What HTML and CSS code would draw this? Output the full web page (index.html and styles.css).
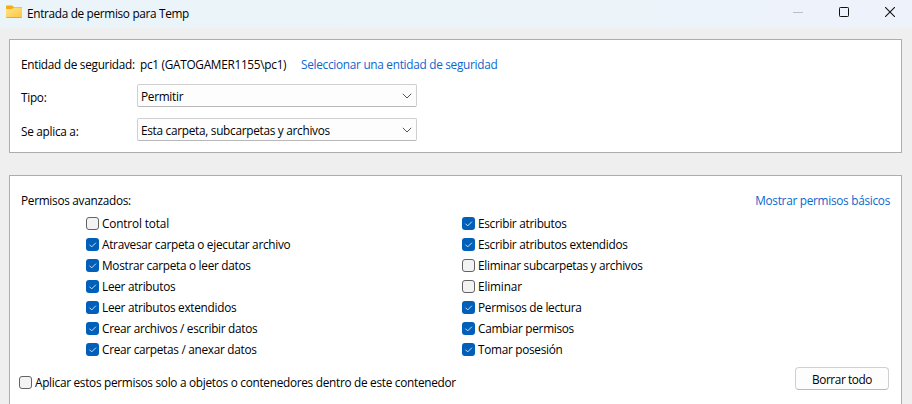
FILE: index.html
```html
<!DOCTYPE html>
<html lang="es">
<head>
<meta charset="utf-8">
<title>Entrada de permiso para Temp</title>
<link rel="stylesheet" href="styles.css">
</head>
<body>
<header class="titlebar">
  <svg class="folder" width="16" height="14" viewBox="0 0 16 14"><defs><linearGradient id="f" x1="0" y1="0" x2="1" y2="1"><stop offset="0" stop-color="#ffe391"/><stop offset="1" stop-color="#fcc63d"/></linearGradient></defs><path d="M0 5V1.2Q0 .4.8.4H6L8 2h7.2q.8 0 .8.8V5z" fill="#f4ad17"/><path d="M0 4h6l2-1.5h7.2q.8 0 .8.8v8.9q0 .8-.8.8H.8Q0 13 0 12.200z" fill="url(#f)"/><path d="M.5 12.500h15" stroke="#eaa91f"/></svg>
  <h1 class="title">Entrada de permiso para Temp</h1>
  <div class="controls">
    <svg width="10" height="10" viewBox="0 0 10 10"><path d="M0 5.500h10" stroke="#bcc0c5"/></svg>
    <svg width="10" height="10" viewBox="0 0 10 10"><rect x=".5" y=".5" width="9" height="9" rx=".8" fill="none" stroke="#111"/></svg>
    <svg width="10" height="10" viewBox="0 0 10 10"><path d="M0 0l10 10M10 0L0 10" stroke="#111" stroke-width="1.100"/></svg>
  </div>
</header>
<main>
  <section class="panel principal">
    <div class="row entity"><span class="label">Entidad de seguridad:</span><span class="account">pc1 (GATOGAMER1155\pc1)</span><a class="link">Seleccionar una entidad de seguridad</a></div>
    <div class="row"><span class="label">Tipo:</span><div class="select"><span>Permitir</span><svg width="10" height="6" viewBox="0 0 10 6"><path d="M.8.8L5 5 9.200.8" fill="none" stroke="#555"/></svg></div></div>
    <div class="row"><span class="label">Se aplica a:</span><div class="select"><span>Esta carpeta, subcarpetas y archivos</span><svg width="10" height="6" viewBox="0 0 10 6"><path d="M.8.8L5 5 9.200.8" fill="none" stroke="#555"/></svg></div></div>
  </section>
  <section class="panel permissions">
    <div class="heading"><span>Permisos avanzados:</span><a class="link">Mostrar permisos básicos</a></div>
    <div class="columns">
      <div class="column">
        <label class="check"><i class="box"></i><span class="wide">Control total</span></label>
        <label class="check"><i class="box on"></i><span>Atravesar carpeta o ejecutar archivo</span></label>
        <label class="check"><i class="box on"></i><span>Mostrar carpeta o leer datos</span></label>
        <label class="check"><i class="box on"></i><span>Leer atributos</span></label>
        <label class="check"><i class="box on"></i><span>Leer atributos extendidos</span></label>
        <label class="check"><i class="box on"></i><span>Crear archivos / escribir datos</span></label>
        <label class="check"><i class="box on"></i><span>Crear carpetas / anexar datos</span></label>
      </div>
      <div class="column">
        <label class="check"><i class="box on"></i><span>Escribir atributos</span></label>
        <label class="check"><i class="box on"></i><span>Escribir atributos extendidos</span></label>
        <label class="check"><i class="box"></i><span>Eliminar subcarpetas y archivos</span></label>
        <label class="check"><i class="box"></i><span class="wide">Eliminar</span></label>
        <label class="check"><i class="box on"></i><span>Permisos de lectura</span></label>
        <label class="check"><i class="box on"></i><span>Cambiar permisos</span></label>
        <label class="check"><i class="box on"></i><span>Tomar posesión</span></label>
      </div>
    </div>
    <div class="footer">
      <label class="check"><i class="box"></i><span>Aplicar estos permisos solo a objetos o contenedores dentro de este contenedor</span></label>
      <button class="clear">Borrar todo</button>
    </div>
  </section>
</main>
<script src="checks.js"></script>
</body>
</html>
```
FILE: checks.js
```js
// Draw the tick inside every selected box.
document.querySelectorAll('.box.on').forEach(function (box) {
  box.innerHTML = '<svg width="13" height="13" viewBox="0 0 13 13"><path d="M3.500 6.700L5.700 8.900 9.900 4.700" fill="none" stroke="#cfe2f5"/></svg>';
});
```
FILE: styles.css
```css
* { box-sizing: border-box; }
body {
  margin: 0;
  height: 404px;
  overflow: hidden;
  background: #efefef;
  color: #000;
  font: 11.8px/16px "Open Sans", "Noto Sans", sans-serif;
  letter-spacing: -0.28px;
  white-space: nowrap;
}
svg { display: block; flex: none; }
.titlebar {
  display: flex;
  height: 28px;
  padding: 0 17px 0 6px;
  background: linear-gradient(90deg, #eaf4f9, #ebf4f8 50%, #eef3fb 85%);
}
.folder { margin-top: 5px; }
.title { margin: 5px 0 0 5px; font-size: 11.8px; font-weight: 400; letter-spacing: -0.32px; }
.controls { display: flex; gap: 36px; margin: 7px 0 0 auto; }
.panel { margin: 0 10px 0 9px; background: #fff; border: 1px solid #adadad; }
.principal { height: 114px; margin-top: 11px; padding: 16px 0 0 11px; }
.row { display: flex; height: 23px; margin-bottom: 11px; align-items: center; }
.entity { height: 16px; margin-bottom: 12px; }
.label { width: 116px; flex: none; padding-top: 2px; }
.entity .label { width: 119px; padding: 0; }
.account { width: 161px; }
.link { color: #0b66cf; }
.select {
  display: flex;
  align-items: center;
  justify-content: space-between;
  width: 280px;
  height: 23px;
  padding: 0 4px 0 3px;
  background: #fdfdfd;
  border: 1px solid #d0d0d0;
  border-bottom-color: #b8b8b8;
  border-radius: 2px;
}
.permissions { height: 229px; margin-top: 22px; padding: 16px 11px 0; border-bottom: 0; }
.heading { display: flex; justify-content: space-between; }
.columns { display: grid; grid-template-columns: 376px 1fr; margin: 5px 0 0 65px; }
.check { display: flex; align-items: center; gap: 3px; height: 21px; }
.check span { margin-top: -1px; }
.wide { letter-spacing: -0.15px; }
.box {
  width: 13px;
  height: 13px;
  flex: none;
  background: #f3f3f3;
  border: 1px solid #636363;
  border-radius: 3px;
}
.box.on { background: #005fb8; border: 0; }
.footer { display: flex; justify-content: space-between; margin: 7px 1px 0 -2px; }
.footer .check { margin-top: 5px; }
.clear {
  width: 94px;
  height: 23px;
  padding: 0;
  background: #fdfdfd;
  border: 1px solid #d0d0d0;
  border-bottom-color: #bababa;
  border-radius: 4px;
  color: #000;
  font: inherit;
  letter-spacing: -0.4px;
}
```
